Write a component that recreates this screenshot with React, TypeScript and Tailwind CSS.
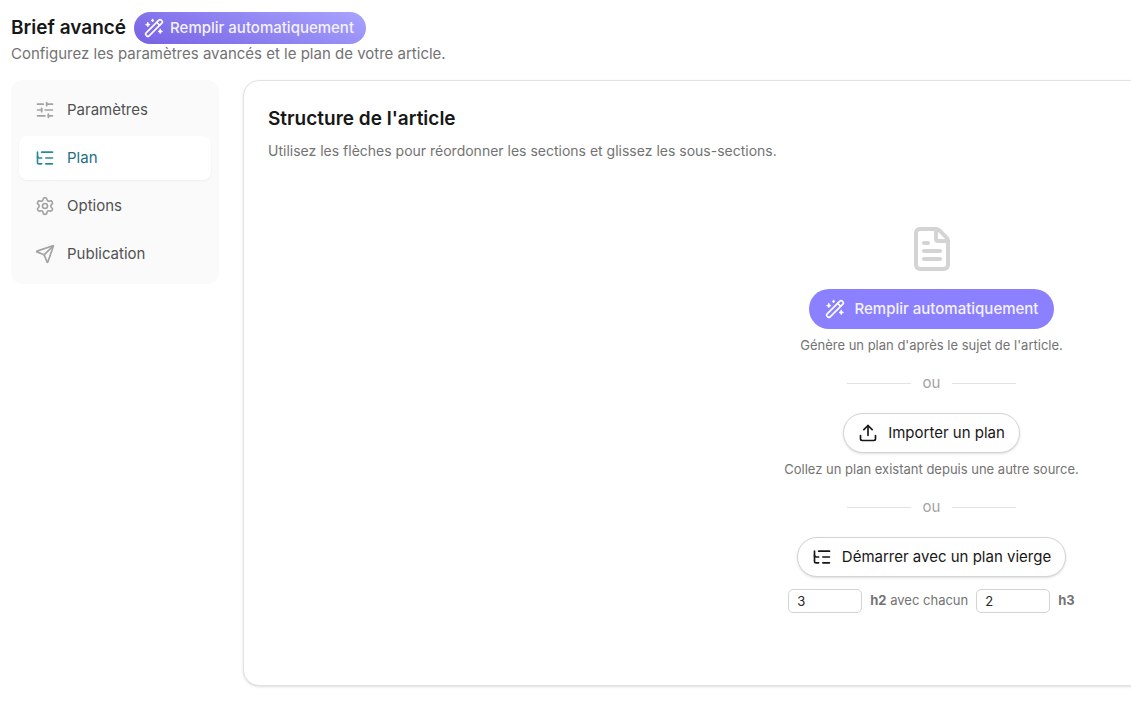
import { FileText, ListTree, Send, Settings, SlidersHorizontal, Upload } from "lucide-react";

function MagicWand() {
  return (
    <svg
      className="size-5 shrink-0 text-white"
      viewBox="0 0 24 24"
      fill="none"
      stroke="currentColor"
      strokeWidth="2"
      strokeLinecap="round"
      strokeLinejoin="round"
      aria-hidden="true"
    >
      <rect x="-0.8" y="9.5" width="25.6" height="5" rx="2" transform="rotate(-45 12 12)" />
      <path d="M15.4 5.4 18.6 8.6" />
      <g fill="currentColor" strokeWidth="1">
        <path d="M4.6 5.2 5.4 7.1 7.3 7.9 5.4 8.7 4.6 10.6 3.8 8.7 1.9 7.9 3.8 7.1Z" />
        <path d="M10.3 1.4 10.9 2.4 11.9 3 10.9 3.6 10.3 4.6 9.7 3.6 8.7 3 9.7 2.4Z" />
        <path d="M19.5 13.4 20.3 15.3 22.2 16.1 20.3 16.9 19.5 18.8 18.7 16.9 16.8 16.1 18.7 15.3Z" />
      </g>
    </svg>
  );
}

const sections = [
  { label: "Paramètres", icon: SlidersHorizontal, active: false },
  { label: "Plan", icon: ListTree, active: true },
  { label: "Options", icon: Settings, active: false },
  { label: "Publication", icon: Send, active: false },
];

function OrDivider() {
  return (
    <div className="flex h-5 items-center gap-3 text-[15px] text-[#a3a3a3]">
      <span className="h-px w-16 bg-[#e2e2e2]" />
      <span>ou</span>
      <span className="h-px w-16 bg-[#e2e2e2]" />
    </div>
  );
}

const outlineButton =
  "flex h-10 items-center gap-2.5 rounded-full border border-[#d4d4d4] bg-white px-3.5 text-[15px] text-[#171717] shadow-sm";

const numberField =
  "h-6 w-[74px] rounded-[5px] border border-[#d4d4d4] bg-white px-2 text-[13px] text-[#262626]";

export default function App() {
  return (
    <div className="min-h-screen overflow-x-hidden bg-white px-[11px] pt-3 pb-4 font-['Inter',sans-serif]">
      <header>
        <div className="flex items-center gap-2">
          <h1 className="text-[19px] font-semibold text-[#171717]">Brief avancé</h1>
          <button
            type="button"
            className="flex h-8 items-center gap-1.5 rounded-full bg-linear-[20deg] from-[#7561e3] to-[#a9a4ff] pr-3 pl-2.5 text-[15px] font-medium text-[#f4f2ff]"
          >
            <MagicWand />
            Remplir automatiquement
          </button>
        </div>
        <p className="text-[15px] leading-5 text-[#737373]">
          Configurez les paramètres avancés et le plan de votre article.
        </p>
      </header>

      <div className="mt-4 flex items-start gap-6">
        <nav className="flex w-52 shrink-0 flex-col gap-1 rounded-xl bg-[#fafafa] p-2">
          {sections.map(({ label, icon: Icon, active }) => (
            <button
              key={label}
              type="button"
              className={
                active
                  ? "flex h-11 items-center gap-3 rounded-lg bg-white px-4 text-[15px] text-[#24707f] shadow-xs"
                  : "flex h-11 items-center gap-3 rounded-lg px-4 text-[15px] text-[#525252]"
              }
            >
              <Icon
                size={20}
                strokeWidth={2}
                className={active ? "text-[#2b8a97]" : "text-[#a3a3a3]"}
              />
              {label}
            </button>
          ))}
        </nav>

        <main className="min-w-[1377px] flex-1 rounded-2xl border border-[#e2e2e2] bg-white p-6 pb-[72px] shadow-sm">
          <h2 className="text-[19px] leading-7 font-semibold text-[#171717]">Structure de l'article</h2>
          <p className="mt-2 text-sm leading-5 text-[#737373]">
            Utilisez les flèches pour réordonner les sections et glissez les sous-sections.
          </p>

          <div className="mt-16 flex flex-col items-center">
            <FileText size={48} className="text-[#d4d4d4]" />
            <button
              type="button"
              className="mt-4 flex h-10 items-center gap-2.5 rounded-full bg-[#8b80ff] px-4 text-[15px] font-medium text-[#f4f2ff]"
            >
              <MagicWand />
              Remplir automatiquement
            </button>
            <p className="mt-1.5 mb-[18px] text-[13px] leading-5 text-[#737373]">
              Génère un plan d'après le sujet de l'article.
            </p>
            <OrDivider />
            <button type="button" className={`mt-5 ${outlineButton}`}>
              <Upload size={20} />
              Importer un plan
            </button>
            <p className="mt-1.5 mb-[18px] text-[13px] leading-5 text-[#737373]">
              Collez un plan existant depuis une autre source.
            </p>
            <OrDivider />
            <button type="button" className={`mt-5 ${outlineButton}`}>
              <ListTree size={20} />
              Démarrer avec un plan vierge
            </button>
            <div className="mt-3 flex items-center gap-2 text-[13px] text-[#737373]">
              <input id="h2-count" type="text" inputMode="numeric" defaultValue="3" className={numberField} />
              <label htmlFor="h2-count">
                <b className="font-bold">h2</b> avec chacun
              </label>
              <input id="h3-count" type="text" inputMode="numeric" defaultValue="2" className={numberField} />
              <label htmlFor="h3-count" className="font-bold">
                h3
              </label>
            </div>
          </div>
        </main>
      </div>
    </div>
  );
}
